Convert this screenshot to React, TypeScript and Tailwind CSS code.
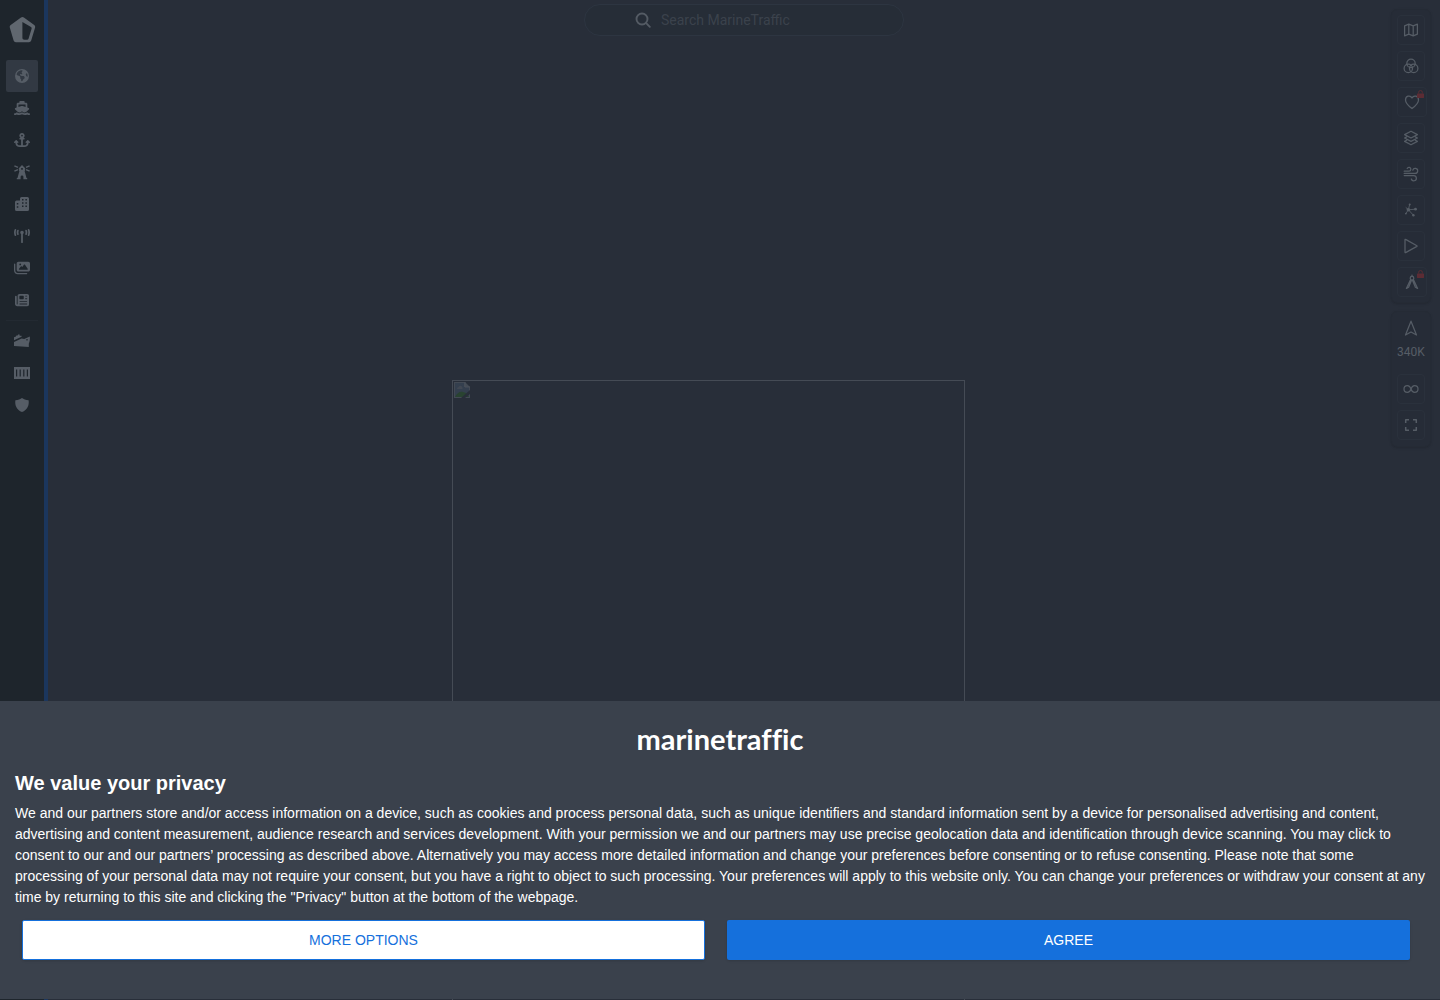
import type { ReactNode } from "react";
import {
  FaAnchor,
  FaEarthAmericas,
  FaImages,
  FaNewspaper,
  FaShip,
  FaTowerBroadcast,
} from "react-icons/fa6";

function Solid({ children }: { children: ReactNode }) {
  return (
    <svg viewBox="0 0 16 16" className="size-4" fill="currentColor" aria-hidden="true">
      {children}
    </svg>
  );
}

function Line({ children }: { children: ReactNode }) {
  return (
    <svg
      viewBox="0 0 16 16"
      className="size-4 shrink-0"
      fill="none"
      stroke="currentColor"
      strokeWidth="1.25"
      strokeLinecap="round"
      strokeLinejoin="round"
      aria-hidden="true"
    >
      {children}
    </svg>
  );
}

const mainNav = [
  { label: "Live map", icon: <FaEarthAmericas className="size-3.5" /> },
  { label: "Vessels", icon: <FaShip className="size-4" /> },
  { label: "Ports", icon: <FaAnchor className="size-4" /> },
  {
    label: "Lights",
    icon: (
      <Solid>
        <path d="M4.800 4.200 8 1l3.200 3.200v1.600h-.5l.4 1.200h-.5L12.500 14H13.200v1.200H9.400v-2.400a1.400 1.400 0 0 0-2.800 0v2.400H2.800V14h.7L5.400 7h-.5l.4-1.200h-.5zM7.200 4v1.800h1.600V4z" />
        <path d="M.4 1.800 4 3.400M.4 7.200 4 5.600M15.600 1.800 12 3.400M15.600 7.200 12 5.600" stroke="currentColor" strokeWidth="1.400" />
      </Solid>
    ),
  },
  {
    label: "Companies",
    icon: (
      <Solid>
        <path
          fillRule="evenodd"
          d="M1 6.200A1.600 1.600 0 0 1 2.600 4.600H6V2.600A1.600 1.600 0 0 1 7.600 1h5.800A1.600 1.600 0 0 1 15 2.600v10.800a1.600 1.600 0 0 1-1.600 1.600H2.600A1.600 1.600 0 0 1 1 13.400zM8 3v1.500h1.500V3zm3.400 0v1.500h1.500V3zM8 6.200v1.500h1.500V6.200zm3.400 0v1.500h1.500V6.200zM8 9.400v1.500h1.500V9.400zm3.400 0v1.500h1.500V9.400zM2.800 7v1.500h1.500V7zm0 3.200v1.500h1.500v-1.500z"
        />
      </Solid>
    ),
  },
  { label: "Stations", icon: <FaTowerBroadcast className="size-4" /> },
  { label: "Photos", icon: <FaImages className="size-4" /> },
  { label: "News", icon: <FaNewspaper className="size-3.5" /> },
];

const serviceNav = [
  {
    label: "Voyages",
    icon: (
      <Solid>
        <path d="M0 5.200V4.200l2-.6V2.800l2-.6V1.400h1.600v1.400h2v1L0 7.200zM0 9l7.600-3.600 2.600.6 5.600-2.600c.4 3.200-.2 5.200-1 7.400v3.200L0 12.900z" />
        <path d="M13 6v1.500" stroke="#1e252c" strokeWidth="1.200" />
      </Solid>
    ),
  },
  {
    label: "Containers",
    icon: (
      <Solid>
        <path fillRule="evenodd" d="M0 2h16v12H0zm2 2.400v7.200h1.200V4.400zm3.600 0v7.200h1.200V4.400zm3.600 0v7.200h1.200V4.400zm3.600 0v7.200H14V4.400z" />
      </Solid>
    ),
  },
  {
    label: "Protection",
    icon: (
      <Solid>
        <path d="M8 1c1.600 1.200 3.800 2.200 6.600 2.200.8 5-1.400 9.800-6.600 11.800C2.800 13 .6 8.200 1.400 3.200 4.200 3.200 6.400 2.200 8 1z" />
      </Solid>
    ),
  },
];

const mapTools = [
  {
    label: "Map style",
    icon: (
      <Line>
        <path d="m1.600 3.800 4.200-1.600 4.400 1.600 4.200-1.600v10l-4.200 1.600-4.400-1.600-4.200 1.600zM5.800 2.200v10M10.200 3.800v10" />
      </Line>
    ),
  },
  {
    label: "Filters",
    icon: (
      <Line>
        <circle cx="8" cy="5.400" r="4.200" />
        <circle cx="5.300" cy="10.400" r="4.200" />
        <circle cx="10.700" cy="10.400" r="4.200" />
      </Line>
    ),
  },
  {
    label: "My fleets",
    locked: true,
    icon: (
      <Line>
        <path d="M8 14.600C4.500 11.800 1.500 9.200 1.500 5.900c0-3.900 4.700-5.300 6.500-1.900 1.800-3.400 6.500-2 6.500 1.900 0 3.300-3 5.900-6.500 8.700z" />
      </Line>
    ),
  },
  {
    label: "Layers",
    icon: (
      <Line>
        <path d="m8 1.200 6.400 3.400L8 8 1.600 4.600zM3.600 6.900 1.600 8 8 11.400 14.400 8l-2-1.100M3.600 10.300l-2 1.100L8 14.800l6.400-3.400-2-1.100" />
      </Line>
    ),
  },
  {
    label: "Weather",
    icon: (
      <Line>
        <path d="M1.200 5.200h4.800a1.900 1.900 0 1 0-1.800-2.700M1.200 7.400h11a2.500 2.500 0 1 0-2.400-3.200M1.200 9.600h9.600a2.600 2.600 0 1 1-2.500 3.400" />
      </Line>
    ),
  },
  {
    label: "Density",
    icon: (
      <Line>
        <path d="m5.400 7.800 1.200-5M5.400 7.800l-2.600 3.800M5.400 7.800l7-.6M5.400 7.800l5 5.400M5.400 7.800 3 5.600" strokeWidth=".9" />
        <g fill="currentColor" stroke="none">
          <circle cx="5.400" cy="7.800" r="1.800" />
          <circle cx="6.700" cy="2.600" r="1" />
          <circle cx="12.500" cy="7.200" r="1.400" />
          <circle cx="10.400" cy="13.200" r="1.200" />
          <circle cx="2.900" cy="11.600" r=".9" />
        </g>
      </Line>
    ),
  },
  {
    label: "Playback",
    icon: (
      <Line>
        <path d="M2 1.700v12.600c0 .4.300.5.600.3L13.900 8.400c.3-.2.300-.5 0-.7L2.600 1.400c-.3-.2-.6-.1-.6.3z" />
      </Line>
    ),
  },
  {
    label: "Measure",
    locked: true,
    icon: (
      <Line>
        <path d="M8 1v1.400M6.600 5.600 2.400 14.400l2.200-1.200L7.400 6.400M9.400 5.600l4.200 8.800-2.200-1.200L8.600 6.400" />
        <circle cx="8" cy="4.200" r="1.800" />
      </Line>
    ),
  },
];

const viewTools = [
  {
    label: "Show all",
    icon: (
      <Line>
        <path d="M8 8c-.8-2.400-2-3.400-3.600-3.400a3.400 3.400 0 0 0 0 6.800C6 11.400 7.200 10.400 8 8s2-3.400 3.600-3.400a3.400 3.400 0 0 1 0 6.800C10 11.400 8.800 10.400 8 8z" />
      </Line>
    ),
  },
  {
    label: "Full screen",
    icon: (
      <Line>
        <path d="M2.700 6V2.700H6M10 2.700h3.300V6M13.300 10v3.300H10M6 13.300H2.700V10" strokeLinecap="butt" strokeWidth="1.500" />
      </Line>
    ),
  },
];

function NavButton({ label, icon, active }: { label: string; icon: ReactNode; active?: boolean }) {
  return (
    <button
      type="button"
      aria-label={label}
      className={
        active
          ? "flex size-8 items-center justify-center rounded-xs bg-[#323943]"
          : "flex size-8 items-center justify-center"
      }
    >
      {icon}
    </button>
  );
}

function ToolButton({ label, icon, locked }: { label: string; icon: ReactNode; locked?: boolean }) {
  return (
    <button
      type="button"
      aria-label={label}
      className={
        locked
          ? "relative flex h-[30px] w-[30px] items-center justify-center rounded-sm border border-[#2a313c]"
          : "relative flex h-[30px] w-7 items-center justify-center rounded-sm border border-[#2a313c]"
      }
    >
      {icon}
      {locked && (
        <svg viewBox="0 0 7 8" className="absolute top-0.5 right-0.5 h-2 w-[7px]" fill="#5c2c34" aria-hidden="true">
          <path d="M1.700 3.500V2.300a1.800 1.800 0 0 1 3.600 0v1.200" fill="none" stroke="#5c2c34" strokeWidth="1" />
          <rect y="3.500" width="7" height="4.500" rx=".6" />
        </svg>
      )}
    </button>
  );
}

export default function App() {
  return (
    <div className="flex min-h-screen bg-[#282e39] font-['Liberation_Sans',Arial,sans-serif]">
      <nav aria-label="Main" className="flex w-12 shrink-0 flex-col border-r-4 border-[#1b365d] bg-[#1e252c] px-1.5 pt-4 text-[#565d66]">
        <a href="#home" aria-label="MarineTraffic home" className="flex h-7 w-8 items-center justify-center">
          <svg viewBox="0 0 28 28" className="size-7" aria-hidden="true">
            <path
              fillRule="evenodd"
              fill="#60676f"
              d="M13 1.500a2.400 2.400 0 0 1 2.900 0l10.300 7.500c.8.600 1.200 1.600.9 2.600l-3.900 13a2.400 2.400 0 0 1-2.300 1.600H7.900a2.400 2.400 0 0 1-2.300-1.600L1.800 11.600c-.3-1 .1-2 .9-2.600zM14.400 6v15.600c0 1.500.6 2.200 2.200 2.200h2.500c.7 0 1.200-.4 1.400-1l3.100-10.100c.2-.7 0-1.300-.6-1.700z"
            />
          </svg>
        </a>
        <div className="mt-4 flex flex-col">
          {mainNav.map((item, index) => (
            <NavButton key={item.label} label={item.label} icon={item.icon} active={index === 0} />
          ))}
        </div>
        <div className="mt-1 flex flex-col border-t border-[#232a32] pt-1">
          {serviceNav.map((item) => (
            <NavButton key={item.label} label={item.label} icon={item.icon} />
          ))}
        </div>
      </nav>

      <main className="relative flex min-w-0 flex-1 flex-col items-center">
        <label className="mt-1 flex h-8 w-80 items-center gap-2.5 rounded-full border border-[#2d3541] bg-[#262d37] pl-[50px]">
          <svg viewBox="0 0 16 16" className="size-4 shrink-0" fill="none" stroke="#545b64" strokeWidth="1.900" strokeLinecap="round" aria-hidden="true">
            <circle cx="7" cy="7" r="5.500" />
            <path d="m11.200 11.200 3.600 3.600" />
          </svg>
          <input
            type="search"
            aria-label="Search MarineTraffic"
            placeholder="Search MarineTraffic"
            className="w-40 bg-transparent font-[Roboto,sans-serif] text-sm text-[#9aa0a8] outline-none placeholder:text-[#3b424c]"
          />
        </label>

        <div className="mt-[344px] flex w-full flex-1 justify-center pr-[71px]">
          <div role="img" aria-label="Map" className="w-[513px] border border-b-0 border-[#454b55] p-px">
            <svg viewBox="0 0 16 16" className="size-4" aria-hidden="true">
              <path d="M0 0h11l5 5v11H0z" fill="#434a54" />
              <path d="M1 1h9v4h5v10H1z" fill="#343f4e" />
              <path d="M3 7c0-2 2-2 2.500-3C7 3 9 5 8.500 7z" fill="#414853" />
              <path d="M1 15c2-4 5-6 8-5l3 1 3 4z" fill="#294331" />
              <path d="M16 8v4l-5 4H7z" fill="#282e39" />
              <path d="M11 0v5h5" fill="none" stroke="#4a515b" />
            </svg>
          </div>
        </div>

        <aside aria-label="Map controls" className="absolute top-[9px] right-[9px] flex w-10 flex-col gap-2 text-[#565d66]">
          <div className="flex flex-col items-start gap-1.5 rounded-md border border-[#252b35] bg-[#262c37] py-[5px] pl-[5px] shadow-sm">
            {mapTools.map((tool) => (
              <ToolButton key={tool.label} label={tool.label} icon={tool.icon} locked={tool.locked} />
            ))}
          </div>
          <div className="flex flex-col items-start gap-1.5 rounded-md border border-[#252b35] bg-[#262c37] pt-2 pb-1.5 pl-[5px] shadow-sm">
            <button type="button" aria-label="Vessels in view: 340K" className="mb-2 flex w-7 flex-col items-center gap-2">
              <Line>
                <path d="M8 1.200 13.500 15 8 12 2.500 15z" />
              </Line>
              <span className="font-[Roboto,sans-serif] text-xs leading-4">340K</span>
            </button>
            {viewTools.map((tool) => (
              <ToolButton key={tool.label} label={tool.label} icon={tool.icon} />
            ))}
          </div>
        </aside>
      </main>

      <section
        role="dialog"
        aria-labelledby="privacy-title"
        className="fixed inset-x-0 bottom-px bg-[#3a414c] px-[15px] pt-[22px] pb-[39px] text-white"
      >
        <p className="text-center font-[Lato,sans-serif] text-[29px] leading-8 font-bold [font-variant-ligatures:none]">
          marinetraffic
        </p>
        <h2 id="privacy-title" className="mt-3.5 text-xl leading-7 font-bold">
          We value your privacy
        </h2>
        <p className="mt-1.5 text-sm leading-[21px]">
          We and our <a href="#partners">partners</a> store and/or access information on a device, such as cookies and
          process personal data, such as unique identifiers and standard information sent by a device for personalised
          advertising and content, advertising and content measurement, audience research and services development. With
          your permission we and our partners may use precise geolocation data and identification through device
          scanning. You may click to consent to our and our partners’ processing as described above. Alternatively you
          may access more detailed information and change your preferences before consenting or to refuse consenting.
          Please note that some processing of your personal data may not require your consent, but you have a right to
          object to such processing. Your preferences will apply to this website only. You can change your preferences
          or withdraw your consent at any time by returning to this site and clicking the "Privacy" button at the bottom
          of the webpage.
        </p>
        <div className="mt-3 mr-[15px] ml-[7px] grid grid-cols-2 gap-[22px] text-sm">
          <button type="button" className="h-10 rounded-xs border border-[#1570dc] bg-white text-[#1570dc] shadow-sm">
            MORE OPTIONS
          </button>
          <button type="button" className="h-10 rounded-xs bg-[#1570dc] text-white shadow-sm">
            AGREE
          </button>
        </div>
      </section>
    </div>
  );
}
